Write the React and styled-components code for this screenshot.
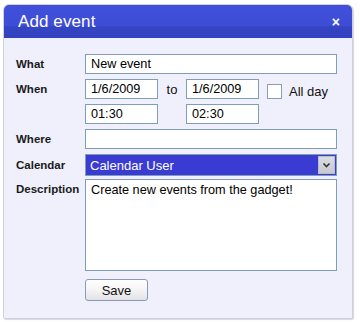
import React from "react";
import styled, { createGlobalStyle } from "styled-components";

const GlobalStyle = createGlobalStyle`
    html, body {
        margin: 0;
        padding: 0;
        background: #ffffff;
    }
    body {
        font-family: "Liberation Sans", Arial, sans-serif;
    }
`;

const Page = styled.div`
    width: 360px;
    height: 322px;
    padding: 4px 0 0 3px;
    box-sizing: border-box;
`;

const Dialog = styled.div`
    width: 350px;
    height: 315px;
    box-sizing: border-box;
    border: 1px solid #cfd1da;
    border-radius: 6px 6px 2px 2px;
    background: #eff0fb;
    box-shadow: 1px 1px 1px #d8d8de;
    overflow: hidden;
    display: flex;
    flex-direction: column;
`;

const Header = styled.div`
    height: 33px;
    flex: none;
    display: flex;
    align-items: center;
    justify-content: space-between;
    padding: 0 12px 0 14px;
    background: linear-gradient(#4150da 0%, #3e4dd6 62%, #3444c3 66%, #3242bf 100%);
    color: #ffffff;
`;

const Title = styled.div`
    font-size: 17px;
    letter-spacing: 0.1px;
`;

const Close = styled.div`
    font-size: 14px;
    font-weight: bold;
    line-height: 1;
`;

const Body = styled.div`
    padding: 16px 15px 0 12px;
    display: flex;
    flex-direction: column;
`;

const Row = styled.div`
    display: flex;
    align-items: ${(p) => (p.$top ? "flex-start" : "center")};
    margin-top: ${(p) => p.$gap ?? 5}px;
`;

const Label = styled.div`
    width: 69px;
    flex: none;
    font-size: 11.5px;
    font-weight: bold;
    color: #1a1a1a;
    padding-top: ${(p) => (p.$top ? 4 : 0)}px;
`;

const Field = styled.div`
    height: ${(p) => p.$h ?? 20}px;
    width: ${(p) => (p.$w ? `${p.$w}px` : "auto")};
    flex: ${(p) => (p.$w ? "none" : "1")};
    box-sizing: border-box;
    border: 1px solid #7f9db9;
    background: #ffffff;
    font-size: 12.7px;
    color: #000000;
    padding: ${(p) => (p.$area ? "3px 5px" : "0 5px")};
    display: flex;
    align-items: ${(p) => (p.$area ? "flex-start" : "center")};
`;

const To = styled.div`
    width: 28px;
    text-align: center;
    font-size: 13px;
    color: #111;
`;

const Check = styled.div`
    width: 15px;
    height: 15px;
    box-sizing: border-box;
    border: 1px solid #8c9bb6;
    background: #ffffff;
    margin: 4px 0 0 8px;
`;

const CheckLabel = styled.div`
    margin-left: 7px;
    font-size: 13px;
    color: #111;
    padding-top: 4px;
`;

const Spacer = styled.div`
    width: 28px;
`;

const Select = styled.div`
    flex: 1;
    height: 22px;
    box-sizing: border-box;
    border: 1px solid #7f9db9;
    background: #3a3bd3;
    color: #ffffff;
    font-size: 13px;
    display: flex;
    align-items: center;
    justify-content: space-between;
    padding: 0 1px 0 4px;
`;

const DropButton = styled.div`
    width: 17px;
    height: 18px;
    background: linear-gradient(#dcdce4, #c8c8d2);
    border: 1px solid #b9bccb;
    box-sizing: border-box;
    display: flex;
    align-items: center;
    justify-content: center;
`;

const ButtonRow = styled.div`
    display: flex;
    margin-top: 8px;
`;

const SaveButton = styled.div`
    width: 63px;
    height: 22px;
    margin-left: 69px;
    box-sizing: border-box;
    border: 1px solid #8b9bb7;
    border-radius: 3px;
    background: linear-gradient(#ffffff 0%, #f4f4f4 50%, #e2e2e6 100%);
    font-size: 13px;
    color: #111;
    display: flex;
    align-items: center;
    justify-content: center;
`;

const App = () => {
    return (
        <>
            <GlobalStyle />
            <Page>
                <Dialog>
                    <Header>
                        <Title>Add event</Title>
                        <Close>×</Close>
                    </Header>
                    <Body>
                        <Row $gap={0}>
                            <Label>What</Label>
                            <Field>New event</Field>
                        </Row>
                        <Row>
                            <Label>When</Label>
                            <Field $w={73}>1/6/2009</Field>
                            <To>to</To>
                            <Field $w={73}>1/6/2009</Field>
                            <Check />
                            <CheckLabel>All day</CheckLabel>
                        </Row>
                        <Row>
                            <Label />
                            <Field $w={73}>01:30</Field>
                            <Spacer />
                            <Field $w={73}>02:30</Field>
                        </Row>
                        <Row>
                            <Label>Where</Label>
                            <Field />
                        </Row>
                        <Row>
                            <Label>Calendar</Label>
                            <Select>
                                <span>Calendar User</span>
                                <DropButton>
                                    <svg width="9" height="6" viewBox="0 0 9 6">
                                        <path d="M1.5 1.5 L4.5 4.5 L7.5 1.5" fill="none" stroke="#333" strokeWidth="1.6" />
                                    </svg>
                                </DropButton>
                            </Select>
                        </Row>
                        <Row $top $gap={3}>
                            <Label $top>Description</Label>
                            <Field $h={92} $area>Create new events from the gadget!</Field>
                        </Row>
                        <ButtonRow>
                            <SaveButton>Save</SaveButton>
                        </ButtonRow>
                    </Body>
                </Dialog>
            </Page>
        </>
    );
};

export default App;
